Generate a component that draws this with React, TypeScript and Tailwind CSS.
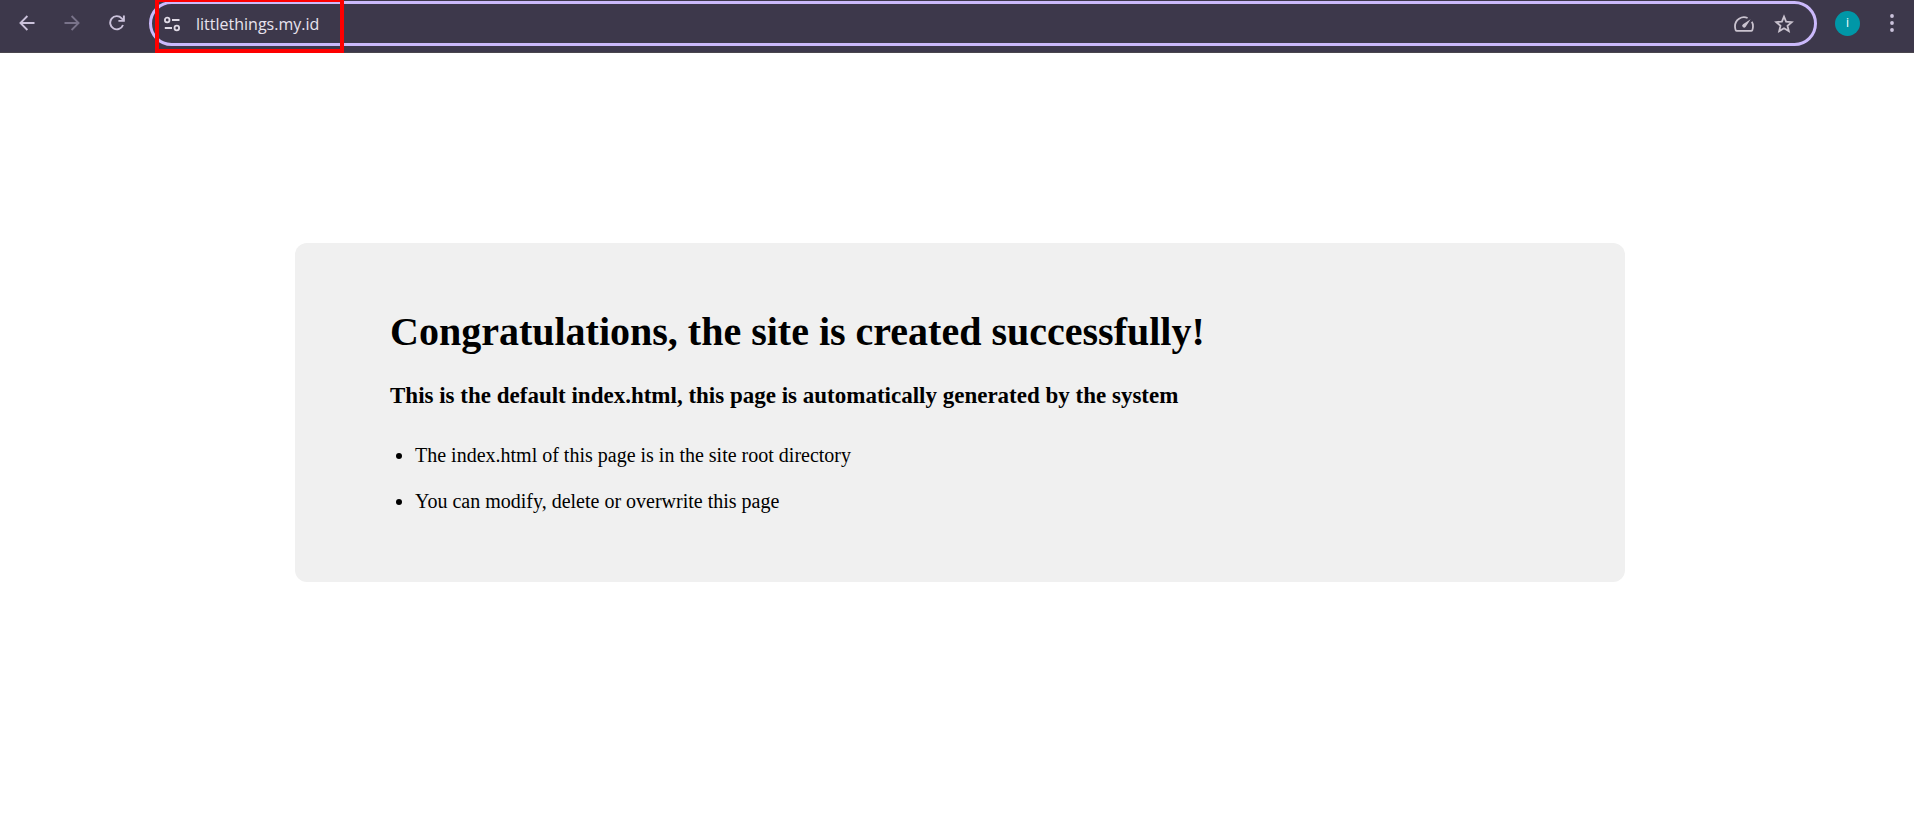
import { ReactNode } from "react";

const IconButton = ({
  label,
  className = "",
  children,
}: {
  label: string;
  className?: string;
  children: ReactNode;
}) => (
  <button
    type="button"
    aria-label={label}
    className={`flex size-7 shrink-0 items-center justify-center rounded-full ${className}`}
  >
    {children}
  </button>
);

const ArrowIcon = ({ className = "" }: { className?: string }) => (
  <svg viewBox="0 0 16 16" className={`size-4 ${className}`} fill="none" stroke="currentColor" strokeWidth="1.8">
    <path d="M15.5 8H1.8M8.4 1 1.4 8l7 7" />
  </svg>
);

const ReloadIcon = () => (
  <svg viewBox="0 0 16 16" className="size-4" fill="none" stroke="currentColor" strokeWidth="1.9">
    <path d="M14 10A6.6 6.6 0 1 1 12.7 3.3L14.8 5.6" />
    <path d="M14.9 .4v5.5H9.4" />
  </svg>
);

const SiteInfoIcon = () => (
  <svg viewBox="0 0 16 16" className="size-4" fill="none" stroke="currentColor" strokeWidth="1.8">
    <circle cx="3.2" cy="4" r="2.3" />
    <path d="M8 4h7.5M.8 12H8" />
    <circle cx="12.8" cy="12" r="2.3" />
  </svg>
);

const GaugeIcon = () => (
  <svg viewBox="0 0 20 16" className="h-4 w-5" fill="none" stroke="currentColor" strokeWidth="1.8">
    <path
      d="M13.6 2A9 9 0 0 0 1 10.2c0 1.6.3 2.9.7 3.9.2.5.6.8 1.1.8h14.4c.5 0 .9-.3 1.1-.8.4-1 .7-2.3.7-3.9 0-1.6-.4-3.1-1.2-4.4"
      strokeLinejoin="round"
    />
    <path d="M16.6 3.2 11.7 10.8a1.9 1.9 0 1 1-2.7-2.6z" fill="currentColor" stroke="none" />
  </svg>
);

const StarIcon = () => (
  <svg viewBox="0 0 20 20" className="size-5" fill="none" stroke="currentColor" strokeWidth="1.8">
    <path d="m10 2.6 2.1 5 5.6.5-4.2 3.6 1.3 5.4-4.8-2.9-4.8 2.9 1.3-5.4-4.2-3.6 5.6-.5z" />
  </svg>
);

const BrowserBar = () => (
  <header className="flex h-[53px] items-start border-b border-[#4a464e] bg-[#3d384b] pt-px text-[#cbc2db]">
    <nav className="flex h-[44px] items-center gap-[17px] pr-[18px] pl-[13px]">
      <IconButton label="Back">
        <ArrowIcon />
      </IconButton>
      <IconButton label="Forward" className="text-[#79738a]">
        <ArrowIcon className="rotate-180" />
      </IconButton>
      <IconButton label="Reload">
        <ReloadIcon />
      </IconButton>
    </nav>

    <div className="relative flex h-[45px] flex-1 items-center rounded-full border-3 border-[#cbb9fb] pr-4 pl-[6px]">
      <IconButton label="View site information" className="text-[#e0dbe6]">
        <SiteInfoIcon />
      </IconButton>
      <input
        type="text"
        aria-label="Address"
        defaultValue="littlethings.my.id"
        className="ml-[10px] min-w-0 flex-1 bg-transparent font-['Open_Sans',sans-serif] text-base text-[#e8e3ee] outline-none"
      />
      <div className="flex items-center gap-3 text-[#cac3cf]">
        <IconButton label="Performance">
          <GaugeIcon />
        </IconButton>
        <IconButton label="Bookmark this page">
          <StarIcon />
        </IconButton>
      </div>
      {/* highlight around the domain */}
      <div className="pointer-events-none absolute -top-[6px] left-[3px] h-[55px] w-[189px] border-4 border-[#fd0000]" />
    </div>

    <div className="flex h-[44px] items-center gap-[18px] pr-2 pl-[18px]">
      <button
        type="button"
        aria-label="Profile"
        className="size-[25px] rounded-full bg-[#0097a7] font-['Open_Sans',sans-serif] text-xs text-white"
      >
        i
      </button>
      <IconButton label="Menu">
        <svg viewBox="0 0 4 18" className="h-[18px] w-1" fill="currentColor">
          <circle cx="2" cy="2" r="1.9" />
          <circle cx="2" cy="9" r="1.9" />
          <circle cx="2" cy="16" r="1.9" />
        </svg>
      </IconButton>
    </div>
  </header>
);

const App = () => (
  <div className="min-h-screen bg-white font-['Liberation_Serif',serif] text-black">
    <BrowserBar />
    <main className="mt-[190px] mr-[289px] ml-[295px] rounded-xl bg-[#f0f0f0] px-[95px] pt-16 pb-[58px]">
      <h1 className="text-[40px] leading-[50px] font-bold">
        Congratulations, the site is created successfully!
      </h1>
      <h3 className="mt-6 text-[23px] leading-[30px] font-bold">
        This is the default index.html, this page is automatically generated by the system
      </h3>
      <ul className="mt-[21px] list-disc pl-[25px] text-xl leading-[46px]">
        <li>The index.html of this page is in the site root directory</li>
        <li>You can modify, delete or overwrite this page</li>
      </ul>
    </main>
  </div>
);

export default App;
